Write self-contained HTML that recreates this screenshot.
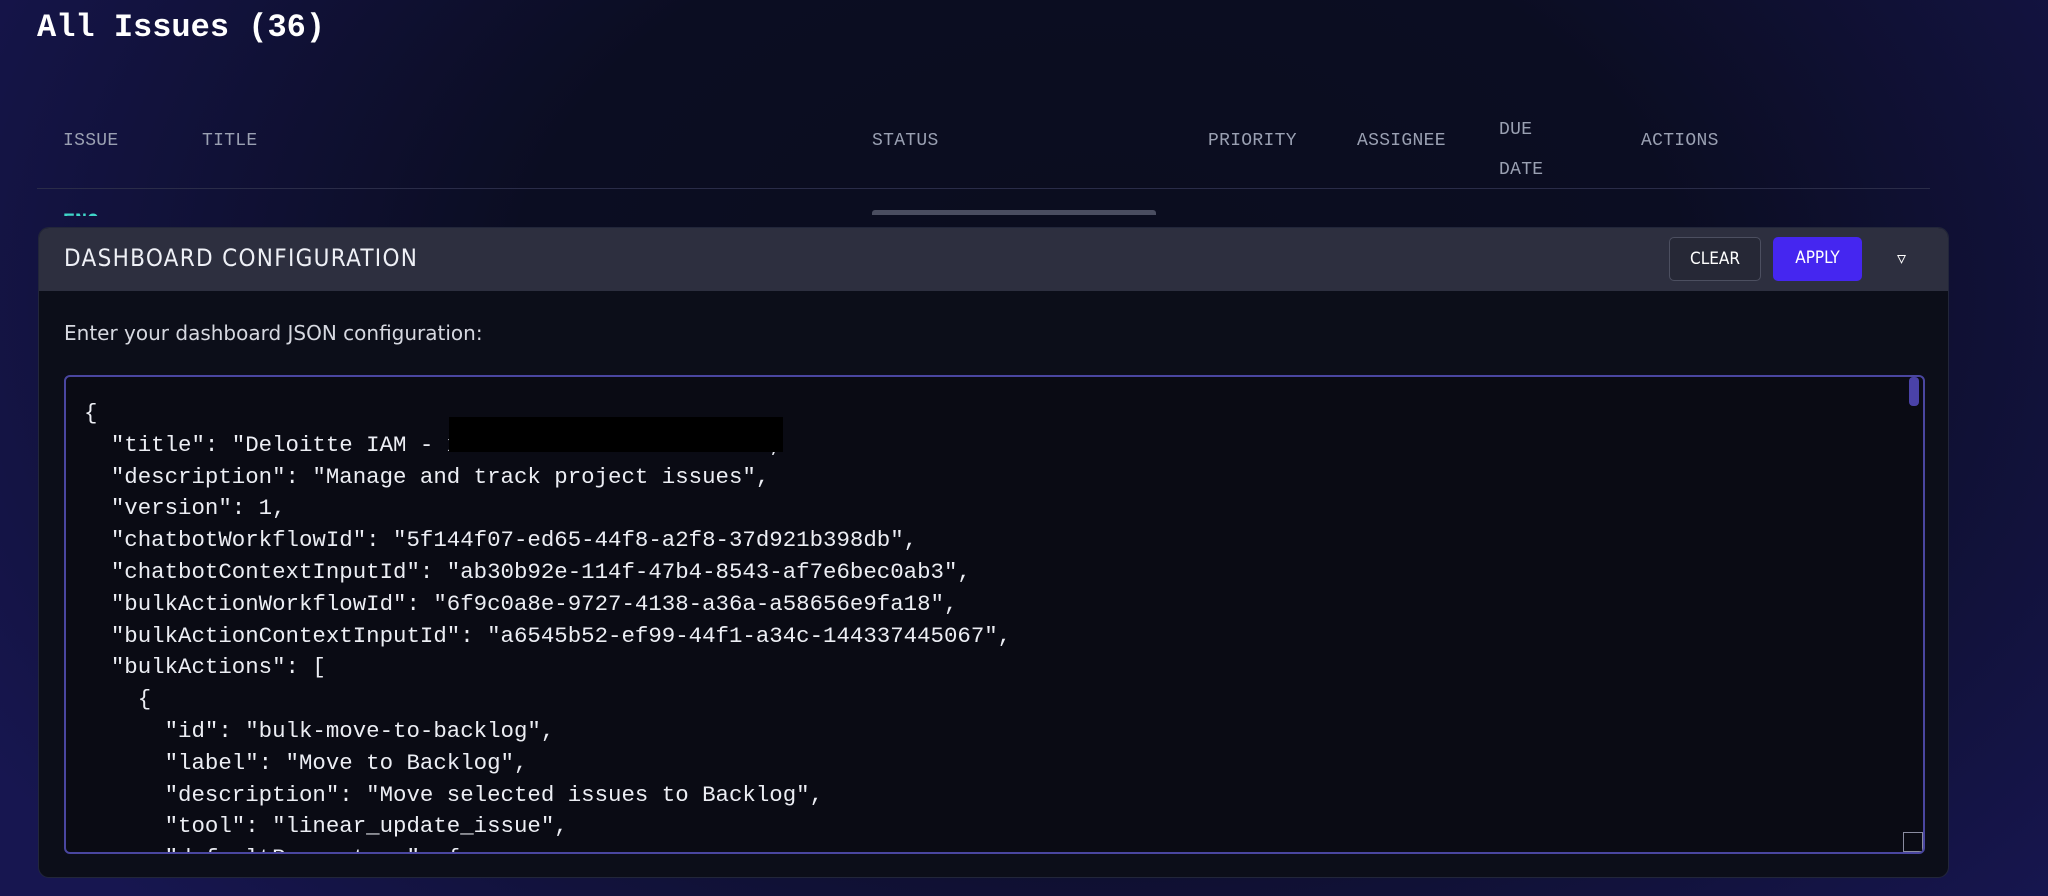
<!DOCTYPE html>
<html><head><style>
html,body{margin:0;padding:0;width:2048px;height:896px;overflow:hidden}
body{background:radial-gradient(ellipse 1300px 900px at 1100px 300px,#0b0d1e 0%,#0b0d22 45%,#171650 100%);background-color:#11123a;position:relative;font-family:"Liberation Sans",sans-serif}
.abs{position:absolute}
h1{position:absolute;left:37px;top:9px;margin:0;font:bold 32px "Liberation Mono",monospace;color:#fff}
.th{position:absolute;top:131px;font:18px "Liberation Mono",monospace;color:#9aa0b2;letter-spacing:0.3px}
.panel{position:absolute;left:38px;top:227px;width:1911px;height:651px;border-radius:11px;background:#0c0e19;border:1px solid #22263a;overflow:hidden;box-sizing:border-box}
.ph{position:absolute;left:0;top:0;width:100%;height:63px;background:#2d2f3f}
.pt{position:absolute;left:25px;top:16px;font:24px "DejaVu Sans Condensed","Liberation Sans",sans-serif;color:#eef0f6;letter-spacing:1.3px}
.btn{position:absolute;top:9px;height:44px;border-radius:5px;box-sizing:border-box;font:17px "DejaVu Sans Condensed","Liberation Sans",sans-serif;color:#fff;text-align:center;line-height:42px}
.lbl{position:absolute;left:25px;top:93px;font:20px "DejaVu Sans",sans-serif;color:#d6d8e0}
.ta{position:absolute;left:25px;top:147px;width:1861px;height:479px;border:2px solid #4a46a0;border-radius:6px;background:#0a0b14;box-sizing:border-box;overflow:hidden}
pre{margin:0;position:absolute;left:18px;top:21px;font:22.4px/31.8px "Liberation Mono",monospace;color:#eceef4}
</style></head><body>
<h1>All Issues (36)</h1>
<div class="th" style="left:63px">ISSUE</div>
<div class="th" style="left:202px">TITLE</div>
<div class="th" style="left:872px">STATUS</div>
<div class="th" style="left:1208px">PRIORITY</div>
<div class="th" style="left:1357px">ASSIGNEE</div>
<div class="th" style="left:1499px;top:110px;line-height:40px">DUE<br>DATE</div>
<div class="th" style="left:1641px">ACTIONS</div>
<div class="abs" style="left:37px;top:188px;width:1893px;height:1px;background:#2a2c48"></div>
<div class="abs" style="left:63px;top:208px;font:bold 20px 'Liberation Mono',monospace;color:#3fd6c8;height:8px;overflow:hidden;line-height:30px">ENG</div>
<div class="abs" style="left:872px;top:210px;width:284px;height:5px;border-radius:3px 3px 0 0;background:#4a4d60"></div>
<div class="panel">
 <div class="ph">
  <div class="pt">DASHBOARD CONFIGURATION</div>
  <div class="btn" style="left:1630px;width:92px;border:1px solid #4c4f60;background:#262836">CLEAR</div>
  <div class="btn" style="left:1734px;width:89px;background:#4526f0">APPLY</div>
  <div class="abs" style="left:1858px;top:20px;color:#fff;font:18px 'DejaVu Sans',sans-serif">▿</div>
 </div>
 <div class="lbl">Enter your dashboard JSON configuration:</div>
 <div class="ta">
<pre>{
  "title": "Deloitte IAM - xxxxxxxxxxxxxxxxxxxxxxx",
  "description": "Manage and track project issues",
  "version": 1,
  "chatbotWorkflowId": "5f144f07-ed65-44f8-a2f8-37d921b398db",
  "chatbotContextInputId": "ab30b92e-114f-47b4-8543-af7e6bec0ab3",
  "bulkActionWorkflowId": "6f9c0a8e-9727-4138-a36a-a58656e9fa18",
  "bulkActionContextInputId": "a6545b52-ef99-44f1-a34c-144337445067",
  "bulkActions": [
    {
      "id": "bulk-move-to-backlog",
      "label": "Move to Backlog",
      "description": "Move selected issues to Backlog",
      "tool": "linear_update_issue",
      "defaultParameters": {</pre>
  <div class="abs" style="left:383px;top:40px;width:334px;height:35px;background:#000"></div>
  <div class="abs" style="right:4px;top:0;width:10px;height:29px;border-radius:4px;background:#4a42a8"></div>
  <div class="abs" style="right:0;bottom:0;width:20px;height:20px;border:1px solid #8a8ca0;box-sizing:border-box;background:#0a0b14"></div>
 </div>
</div>
</body></html>
